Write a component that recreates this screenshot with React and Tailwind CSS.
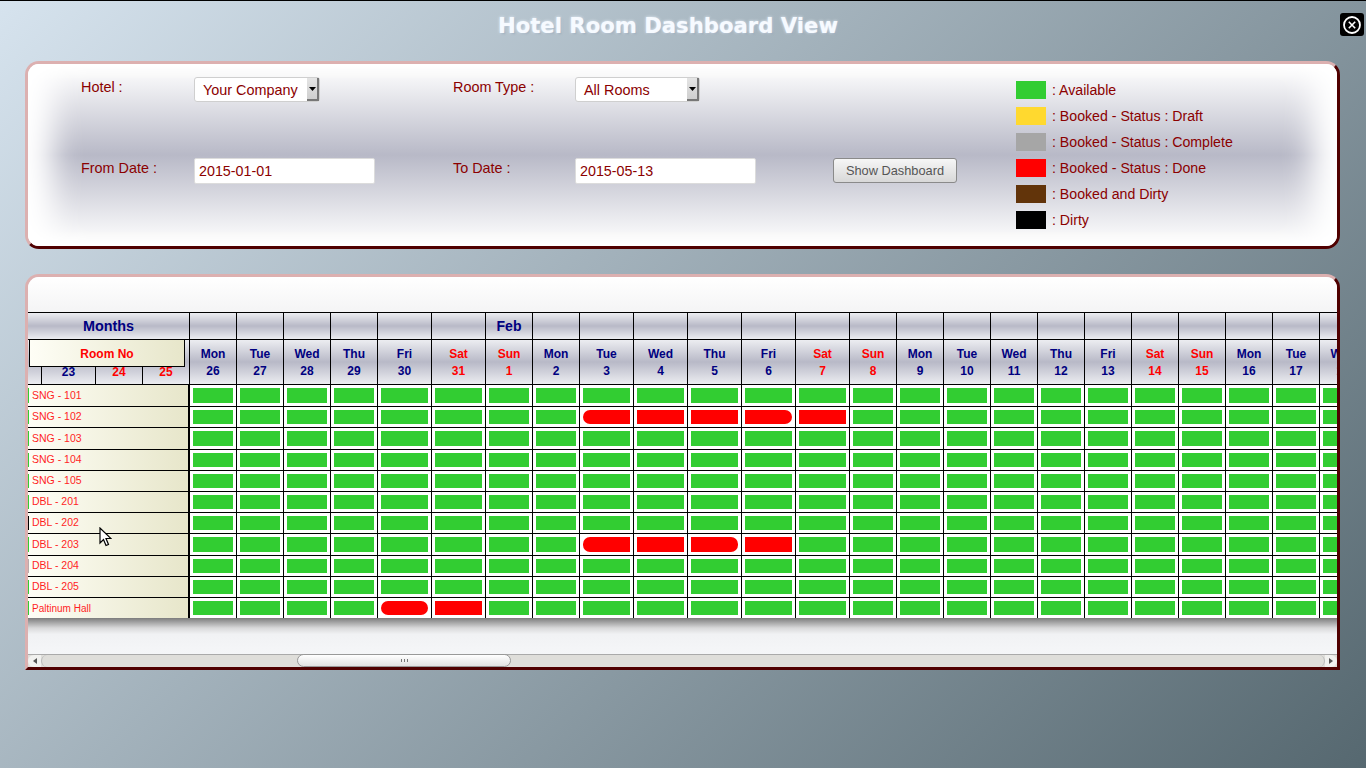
const headerBg = 'bg-[linear-gradient(180deg,#ecedf1_0%,#b8b9c7_50%,#ecedf1_100%)]';
const roomBg = 'bg-[linear-gradient(90deg,#fefef6_0%,#e7e6ca_100%)]';

const legend = [
  { color: 'bg-[#32cd32]', label: ': Available' },
  { color: 'bg-[#ffd92f]', label: ': Booked - Status : Draft' },
  { color: 'bg-[#a6a6a6]', label: ': Booked - Status : Complete' },
  { color: 'bg-[#ff0000]', label: ': Booked - Status : Done' },
  { color: 'bg-[#62340a]', label: ': Booked and Dirty' },
  { color: 'bg-black', label: ': Dirty' },
];

const days = [
  ['Mon', 26], ['Tue', 27], ['Wed', 28], ['Thu', 29], ['Fri', 30, 1], ['Sat', 31, 1], ['Sun', 1],
  ['Mon', 2], ['Tue', 3, 1], ['Wed', 4, 1], ['Thu', 5, 1], ['Fri', 6, 1], ['Sat', 7, 1], ['Sun', 8],
  ['Mon', 9], ['Tue', 10], ['Wed', 11], ['Thu', 12], ['Fri', 13], ['Sat', 14], ['Sun', 15],
  ['Mon', 16], ['Tue', 17], ['Wed', 18],
];

const rooms = [
  { name: 'SNG - 101', h: 'h-[22px]', mark: 'bg-[#32cd32]', booked: {} },
  { name: 'SNG - 102', h: 'h-[21px]', mark: 'bg-[#32cd32]', booked: { 8: 'rounded-l-[7px]', 9: '', 10: '', 11: 'rounded-r-[7px]', 12: '' } },
  { name: 'SNG - 103', h: 'h-[22px]', mark: 'bg-[#32cd32]', booked: {} },
  { name: 'SNG - 104', h: 'h-[21px]', mark: 'bg-[#32cd32]', booked: {} },
  { name: 'SNG - 105', h: 'h-[21px]', mark: 'bg-[#32cd32]', booked: {} },
  { name: 'DBL - 201', h: 'h-[21px]', mark: 'bg-[#32cd32]', booked: {} },
  { name: 'DBL - 202', h: 'h-[21px]', mark: 'bg-black', booked: {} },
  { name: 'DBL - 203', h: 'h-[22px]', mark: 'bg-[#32cd32]', booked: { 8: 'rounded-l-[7px]', 9: '', 10: 'rounded-r-[7px]', 11: '' } },
  { name: 'DBL - 204', h: 'h-[21px]', mark: 'bg-[#b9aaac]', booked: {} },
  { name: 'DBL - 205', h: 'h-[21px]', mark: 'bg-[#32cd32]', booked: {} },
  { name: 'Paltinum Hall', h: 'h-[20px]', size: 'text-[10px]', mark: 'bg-[#32cd32]', booked: { 4: 'rounded-[7px]', 5: '' } },
];

function Select({ value, width }) {
  return (
    <div className={`flex h-[25px] ${width} items-stretch rounded-[3px] border border-[#cfcfcf] bg-white`}>
      <span className="flex-1 pl-2 text-[14.4px] leading-[24px] text-[#8b0000]">{value}</span>
      <span className="flex w-[12px] items-center justify-center border-r-2 border-b-2 border-[#777] bg-[linear-gradient(180deg,#e4e4e4,#cfcfcf)]">
        <svg width="7" height="4" viewBox="0 0 7 4"><path d="M0 0h7L3.5 4z" fill="#000" /></svg>
      </span>
    </div>
  );
}

function DateInput({ value }) {
  return (
    <div className="h-[26px] w-[181px] rounded-[2px] border border-[#dcdcdc] bg-white pl-1 text-[14.3px] leading-[24px] text-[#8b0000]">
      {value}
    </div>
  );
}

function Filters() {
  return (
    <section className="relative h-[188px] w-[1315px] overflow-hidden rounded-[14px] border-[3px] border-t-[#dcb0b0] border-l-[#dcb0b0] border-r-[#500000] border-b-[#500000] bg-[linear-gradient(180deg,#ffffff_1%,#b8b9c7_50%,#ffffff_99%)]">
      <div className="flex h-full shadow-[inset_30px_0_30px_-5px_#ffffff,inset_-30px_0_30px_-5px_#ffffff]">
        <div className="grid grid-cols-[113px_259px_122px_258px_183px] grid-rows-[81px_26px] pl-[53px] pt-[13px] text-[14.4px] leading-5 text-[#8b0000]">
          <span>Hotel :</span>
          <Select value="Your Company" width="w-[126px]" />
          <span>Room Type :</span>
          <Select value="All Rooms" width="w-[125px]" />
          <span />
          <span>From Date :</span>
          <DateInput value="2015-01-01" />
          <span>To Date :</span>
          <DateInput value="2015-05-13" />
          <button className="h-[25px] w-[124px] rounded-[3px] border border-[#8a8a8a] bg-[linear-gradient(180deg,#f6f6f6,#d8d8d8)] text-[12.8px] text-[#555]">
            Show Dashboard
          </button>
        </div>
        <ul className="flex flex-col gap-2 pt-[17px]">
          {legend.map((item) => (
            <li key={item.label} className="flex h-[18px] items-center gap-[6px] text-[14.15px] text-[#8b0000]">
              <span className={`h-[18px] w-[30px] ${item.color}`} />
              <span className="pt-[2px]">{item.label}</span>
            </li>
          ))}
        </ul>
      </div>
    </section>
  );
}

function MonthRow() {
  return (
    <div className="flex h-[27px] border-t border-black">
      <div className={`flex w-[162px] shrink-0 items-center justify-center border-r border-black pt-[1px] text-[14.4px] font-bold text-[#000080] ${headerBg}`}>
        Months
      </div>
      {days.map((d, i) => (
        <div
          key={i}
          className={`flex shrink-0 items-center justify-center border-r border-black pt-[1px] text-[14px] font-bold text-[#000080] ${d[2] ? 'w-[54px]' : 'w-[47px]'} ${headerBg}`}
        >
          {i === 6 ? 'Feb' : ''}
        </div>
      ))}
    </div>
  );
}

function DayCell({ name, num, red, className }) {
  return (
    <div className={`flex shrink-0 flex-col items-center border-r border-black pt-[6px] text-[12px] leading-[17px] font-bold ${red ? 'text-[#ff0000]' : 'text-[#000080]'} ${className} ${headerBg}`}>
      <span>{name}</span>
      <span>{num}</span>
    </div>
  );
}

function DayRow() {
  return (
    <div className="relative flex h-[46px] border-y border-black">
      <div className="flex w-[162px] shrink-0 items-end text-[12px] leading-[17px] font-bold">
        <span className={`h-full w-[14px] border-r border-black ${headerBg}`} />
        <span className={`flex h-full w-[54px] items-end justify-center border-r border-black pb-[3px] text-[#000080] ${headerBg}`}>23</span>
        <span className={`flex h-full w-[47px] items-end justify-center border-r border-black pb-[3px] text-[#ff0000] ${headerBg}`}>24</span>
        <span className={`flex h-full w-[47px] items-end justify-center border-r border-black pb-[3px] text-[#ff0000] ${headerBg}`}>25</span>
      </div>
      {days.map((d, i) => (
        <DayCell
          key={i}
          name={d[0]}
          num={d[1]}
          red={d[0] === 'Sat' || d[0] === 'Sun'}
          className={d[2] ? 'w-[54px]' : 'w-[47px]'}
        />
      ))}
      <div className="absolute top-0 left-[1px] flex h-[27px] w-[156px] items-center justify-center border-x border-b border-black bg-[linear-gradient(90deg,#fefef6_0%,#e7e6ca_100%)] pt-[2px] text-[12px] font-bold text-[#ff0000]">
        Room No
      </div>
    </div>
  );
}

function RoomRow({ room, last }) {
  return (
    <div className={`flex ${room.h} ${last ? '' : 'border-b border-black'}`}>
      <div className={`flex w-[162px] shrink-0 items-center border-r-2 border-black ${roomBg} py-[3px]`}>
        <span className={`h-full w-[1px] ${room.mark}`} />
        <span className={`pl-[3px] text-[#ff1f1f] ${room.size || 'text-[10.5px]'}`}>{room.name}</span>
      </div>
      {days.map((d, i) => {
        const booked = room.booked[i];
        return (
          <div key={i} className={`shrink-0 border-r border-black bg-white p-[3px] ${d[2] ? 'w-[54px]' : 'w-[47px]'}`}>
            <div className={`h-full ${booked !== undefined ? `bg-[#ff0000] ${booked}` : 'bg-[#32cd32]'}`} />
          </div>
        );
      })}
    </div>
  );
}

function Scrollbar() {
  return (
    <div className="flex h-[13px] shrink-0 items-stretch border-t border-[#aaa] bg-[#dfdeda]">
      <div className="flex w-[13px] items-center justify-center rounded-l-[6px] bg-[#f1f1ef]">
        <svg width="4" height="6" viewBox="0 0 4 6"><path d="M4 0v6L0 3z" fill="#555" /></svg>
      </div>
      <div className="relative flex-1 rounded-[6px] border-x border-[#bbb]">
        <div className="absolute top-[-1px] bottom-0 left-[255px] flex w-[214px] items-center justify-center gap-[2px] rounded-[7px] border border-[#999] bg-[linear-gradient(180deg,#ffffff,#e2e2e2)]">
          <span className="h-[3px] w-px bg-[#777]" />
          <span className="h-[3px] w-px bg-[#777]" />
          <span className="h-[3px] w-px bg-[#777]" />
        </div>
      </div>
      <div className="flex w-[12px] items-center justify-center rounded-r-[6px] bg-[#f1f1ef]">
        <svg width="4" height="6" viewBox="0 0 4 6"><path d="M0 0v6l4-3z" fill="#555" /></svg>
      </div>
    </div>
  );
}

function Board() {
  return (
    <section className="flex h-[396px] w-[1315px] flex-col overflow-hidden rounded-t-[14px] border-[3px] border-t-[#dcb0b0] border-l-[#dcb0b0] border-r-[#500000] border-b-[#500000] bg-[#f3f4f6]">
      <div className="h-[35px] shrink-0 bg-[linear-gradient(180deg,#ffffff,#f4f4f5)]" />
      <div className="w-[1400px] shrink-0">
        <MonthRow />
        <DayRow />
        {rooms.map((room, i) => (
          <RoomRow key={room.name} room={room} last={i === rooms.length - 1} />
        ))}
      </div>
      <div className="h-[36px] shrink-0 bg-[linear-gradient(180deg,#7c7c7c_0%,#d9d9da_28%,#f1f2f4_45%,#f5f6f8_100%)]" />
      <Scrollbar />
    </section>
  );
}

export default function App() {
  return (
    <div className="relative h-screen w-full overflow-hidden border-t border-black bg-[linear-gradient(135deg,#d6e3ee_0%,#566870_100%)] font-['Liberation_Sans',sans-serif]">
      <h1 className="pt-[12px] pr-[30px] text-center font-['DejaVu_Sans',sans-serif] text-[21.2px] leading-[26px] font-bold text-[#f6faff] [text-shadow:0_0_3px_#eef5fd,1px_1px_2px_#8899aa]">
        Hotel Room Dashboard View
      </h1>
      <button className="absolute top-[12px] right-[2px] flex h-[23px] w-[24px] items-center justify-center rounded-[3px] bg-black">
        <svg width="20" height="20" viewBox="0 0 20 20" fill="none" stroke="#fff">
          <circle cx="10" cy="10" r="8" strokeWidth="1.8" />
          <path d="M6.8 6.8l6.4 6.4M13.2 6.8l-6.4 6.4" strokeWidth="1.6" />
        </svg>
      </button>
      <div className="flex flex-col gap-[25px] pt-[22px] pl-[25px]">
        <Filters />
        <Board />
      </div>
      <svg className="absolute top-[526px] left-[99px]" width="13" height="20" viewBox="0 0 13 20">
        <path d="M1 1v15l3.5-3.5 2.5 6 2.5-1-2.5-6h5z" fill="#fff" stroke="#000" strokeWidth="1.2" />
      </svg>
    </div>
  );
}
